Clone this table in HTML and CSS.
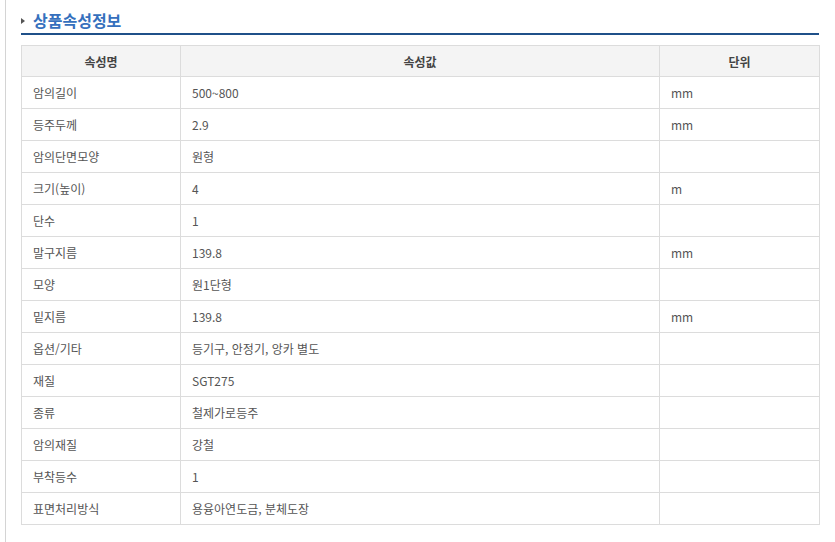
FILE: index.html
```html
<!DOCTYPE html>
<html lang="ko">
<head>
<meta charset="utf-8">
<link rel="stylesheet" href="styles.css">
</head>
<body>
<div class="wrap">
  <h2 class="title"><span class="arrow"></span>상품속성정보</h2>
  <table class="attr">
    <colgroup><col class="c1"><col class="c2"><col class="c3"></colgroup>
    <thead>
      <tr><th>속성명</th><th>속성값</th><th>단위</th></tr>
    </thead>
    <tbody>
      <tr><td>암의길이</td><td>500~800</td><td>mm</td></tr>
      <tr><td>등주두께</td><td>2.9</td><td>mm</td></tr>
      <tr><td>암의단면모양</td><td>원형</td><td></td></tr>
      <tr><td>크기(높이)</td><td>4</td><td>m</td></tr>
      <tr><td>단수</td><td>1</td><td></td></tr>
      <tr><td>말구지름</td><td>139.8</td><td>mm</td></tr>
      <tr><td>모양</td><td>원1단형</td><td></td></tr>
      <tr><td>밑지름</td><td>139.8</td><td>mm</td></tr>
      <tr><td>옵션/기타</td><td>등기구, 안정기, 앙카 별도</td><td></td></tr>
      <tr><td>재질</td><td>SGT275</td><td></td></tr>
      <tr><td>종류</td><td>철제가로등주</td><td></td></tr>
      <tr><td>암의재질</td><td>강철</td><td></td></tr>
      <tr><td>부착등수</td><td>1</td><td></td></tr>
      <tr><td>표면처리방식</td><td>용융아연도금, 분체도장</td><td></td></tr>
    </tbody>
  </table>
</div>
</body>
</html>
```
FILE: styles.css
```css
html, body {
  margin: 0;
  padding: 0;
  background: #fff;
}
body {
  font-family: "Noto Sans CJK KR", "Noto Sans", sans-serif;
  font-size: 12px;
  color: #555;
}
.wrap {
  margin-left: 5px;
  border-left: 1px solid #d4d4d4;
  min-height: 542px;
  box-sizing: border-box;
  padding: 0 16px 0 15px;
}
.title {
  margin: 0;
  padding: 10px 0 3px 0;
  line-height: 20px;
  font-size: 16px;
  font-weight: bold;
  color: #3570bd;
  border-bottom: 2px solid #1f5089;
  display: flex;
  align-items: center;
}
.arrow {
  width: 0;
  height: 0;
  border-top: 3.5px solid transparent;
  border-bottom: 3.5px solid transparent;
  border-left: 4px solid #555;
  margin: 2px 8px 0 0;
}
.attr {
  margin-top: 10px;
  width: 798px;
  border-collapse: collapse;
  table-layout: fixed;
}
.c1 { width: 159px; }
.c2 { width: 479px; }
.c3 { width: 160px; }
.attr th, .attr td {
  border: 1px solid #dcdcdc;
  padding: 0 11px;
  text-align: left;
}
.attr th {
  background: #f4f4f4;
  color: #444;
  font-weight: bold;
  text-align: center;
  height: 30px;
}
.attr td {
  height: 31px;
  color: #555;
}
```
